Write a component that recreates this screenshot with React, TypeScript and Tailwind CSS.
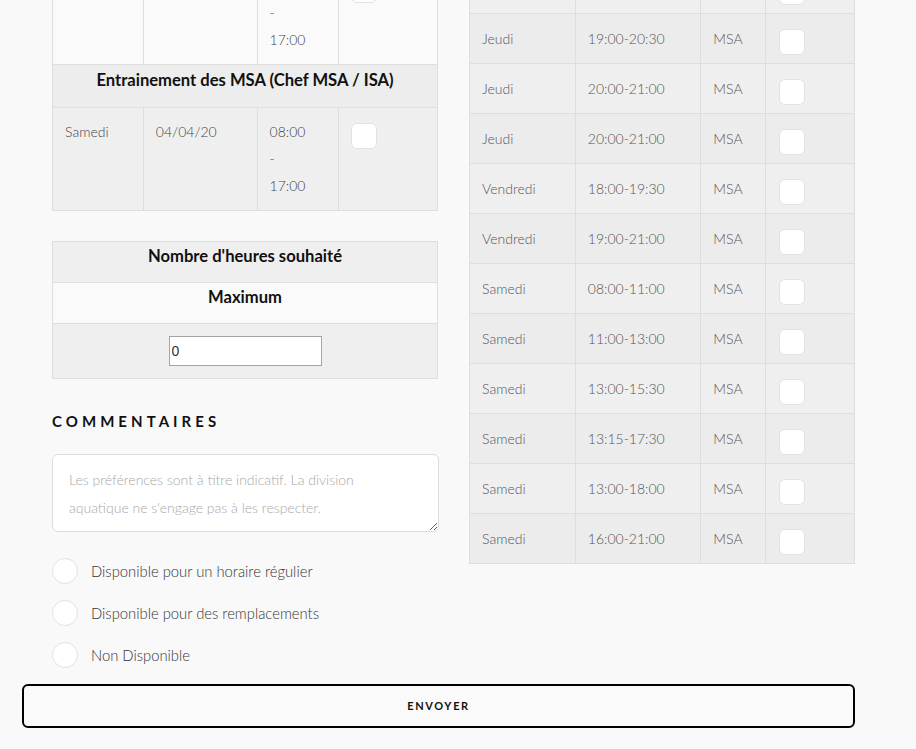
import React from 'react'

const leftRows = [
  { day: 'Samedi', date: '28/03/20', from: '08:00', to: '17:00' },
]

const rightRows = [
  ['Jeudi', '18:00-19:30'],
  ['Jeudi', '19:00-20:30'],
  ['Jeudi', '20:00-21:00'],
  ['Jeudi', '20:00-21:00'],
  ['Vendredi', '18:00-19:30'],
  ['Vendredi', '19:00-21:00'],
  ['Samedi', '08:00-11:00'],
  ['Samedi', '11:00-13:00'],
  ['Samedi', '13:00-15:30'],
  ['Samedi', '13:15-17:30'],
  ['Samedi', '13:00-18:00'],
  ['Samedi', '16:00-21:00'],
]

function Box({ className = '' }: { className?: string }) {
  return (
    <span
      className={`inline-block w-[26px] h-[26px] rounded-[6px] bg-white border border-[#e2e2e2] ${className}`}
    />
  )
}

function SlotRow({ day, date, from, to, bg }: { day: string; date: string; from: string; to: string; bg: string }) {
  return (
    <tr className={bg}>
      <td className="w-[91px] border border-[#dedede] px-[12px] pt-[10px] pb-[11px] align-top">{day}</td>
      <td className="w-[114px] border border-[#dedede] px-[12px] pt-[10px] pb-[11px] align-top">{date}</td>
      <td className="w-[82px] border border-[#dedede] px-[12px] pt-[10px] pb-[11px] align-top">
        <div>{from}</div>
        <div>-</div>
        <div>{to}</div>
      </td>
      <td className="w-[99px] border border-[#dedede] px-[12px] pt-[15px] pb-[11px] align-top">
        <Box className="block" />
      </td>
    </tr>
  )
}

export default function App() {
  return (
    <div
      className="h-[749px] overflow-hidden bg-[#f9f9f9] text-[#444]"
      style={{ fontFamily: 'Lato, "Open Sans", Arial, sans-serif' }}
    >
      <div className="-mt-[37px] pl-[52px] flex items-start gap-[31px]">
        {/* left column */}
        <div className="w-[386px] -mt-[2px]">
          <table className="w-full border-collapse text-[14px] font-light leading-[27px]">
            <tbody>
              {leftRows.map((r) => (
                <SlotRow key={r.date} {...r} bg="bg-[#fafafa]" />
              ))}
              <tr className="bg-[#ededed]">
                <td
                  colSpan={4}
                  className="border border-[#dedede] pt-[3px] pb-[15px] text-center text-[16.6px] font-bold leading-[24px] text-[#111]"
                >
                  Entrainement des MSA (Chef MSA / ISA)
                </td>
              </tr>
              <SlotRow day="Samedi" date="04/04/20" from="08:00" to="17:00" bg="bg-[#efeff0]" />
            </tbody>
          </table>

          <table className="mt-[30px] w-full border-collapse">
            <tbody>
              <tr className="bg-[#efeff0]">
                <td className="border border-[#dedede] pt-[2px] pb-[14px] text-center text-[16.6px] font-bold leading-[24px] text-[#111]">
                  Nombre d'heures souhaité
                </td>
              </tr>
              <tr className="bg-[#fafafa]">
                <td className="border border-[#dedede] pt-[2px] pb-[14px] text-center text-[16.6px] font-bold leading-[24px] text-[#111]">
                  Maximum
                </td>
              </tr>
              <tr className="bg-[#efeff0]">
                <td className="border border-[#dedede] pt-[12px] pb-[12px] text-center">
                  <input
                    defaultValue="0"
                    className="w-[153px] h-[30px] border border-[#a5a5a5] bg-white px-[2px] text-[14px] text-[#333] outline-none"
                    style={{ fontFamily: 'Arial, sans-serif' }}
                  />
                </td>
              </tr>
            </tbody>
          </table>

          <h3 className="mt-[32px] text-[15px] font-bold tracking-[0.27em] text-[#111] leading-[20px]">
            COMMENTAIRES
          </h3>

          <textarea
            className="mt-[23px] block w-[387px] h-[78px] rounded-[6px] border border-[#dcdcdc] bg-white pl-[16px] pr-[60px] pt-[11px] text-[14px] font-light leading-[28px] text-[#444] placeholder:text-[#a8a8a8] outline-none"
            placeholder="Les préférences sont à titre indicatif. La division aquatique ne s'engage pas à les respecter."
          />

          <div className="mt-[26px] flex flex-col gap-[16px]">
            {['Disponible pour un horaire régulier', 'Disponible pour des remplacements', 'Non Disponible'].map((t) => (
              <label key={t} className="flex items-center gap-[13px] text-[14.8px] font-light text-[#333]">
                <span className="w-[26px] h-[26px] rounded-full bg-white border border-[#e2e2e2]" />
                {t}
              </label>
            ))}
          </div>
        </div>

        {/* right column */}
        <div className="w-[386px]">
          <table className="w-full border-collapse text-[14px] font-light text-[#555]">
            <tbody>
              {rightRows.map(([d, h], i) => (
                <tr key={i} className={i % 2 === 0 ? 'bg-[#efeff0]' : 'bg-[#ececec]'}>
                  <td className="w-[106px] h-[50px] border border-[#dedede] px-[12px]">{d}</td>
                  <td className="w-[126px] h-[50px] border border-[#dedede] px-[12px]">{h}</td>
                  <td className="w-[65px] h-[50px] border border-[#dedede] px-[12px]">MSA</td>
                  <td className="w-[89px] h-[50px] border border-[#dedede] pl-[13px] pr-[12px] pt-[12px]">
                    <Box className="block w-[25px] h-[25px]" />
                  </td>
                </tr>
              ))}
            </tbody>
          </table>
        </div>
      </div>

      <div className="pl-[22px] mt-[16px]">
        <button className="w-[833px] h-[44px] rounded-[6px] border-2 border-black bg-[#fafafa] text-[11px] font-bold tracking-[0.15em] text-[#111]">
          ENVOYER
        </button>
      </div>
    </div>
  )
}
